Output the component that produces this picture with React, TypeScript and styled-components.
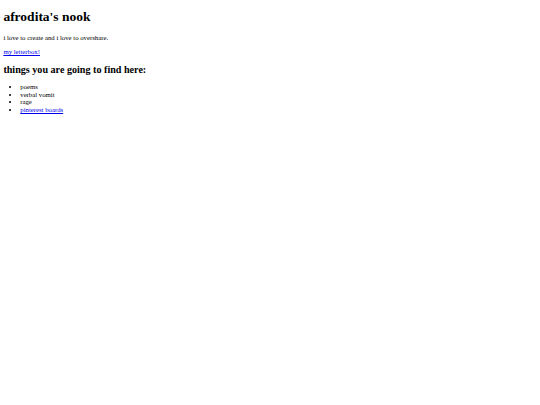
import styled, { createGlobalStyle } from 'styled-components';

// the reference is a plain default-styled page, shown at 540/1280 of its size
const GlobalStyle = createGlobalStyle`
  html, body {
    background: #fff;
  }
  body {
    margin: 3.375px;
    font-family: "Liberation Serif", "Times New Roman", serif;
    font-size: 6.75px;
    color: #000;
  }
`;

const Title = styled.h1`
  font-size: 13.5px;
  font-weight: bold;
  margin: 6px 0 9px;
`;

const Text = styled.p`
  margin: 6.75px 0;
`;

const Link = styled.a`
  color: #0000ee;
  text-decoration: underline;
`;

const Heading = styled.h2`
  font-size: 10.125px;
  font-weight: bold;
  margin: 8.4px 0;
`;

const List = styled.ul`
  margin: 8.5px 0 6.75px;
  padding-left: 16.875px;
  list-style: disc;
`;

const Item = styled.li`
  line-height: 7.7px;
`;

export default function App() {
  return (
    <>
      <GlobalStyle />
      <Title>afrodita's nook</Title>
      <Text>i love to create and i love to overshare.</Text>
      <Text>
        <Link href="#">my letterbox!</Link>
      </Text>
      <Heading>things you are going to find here:</Heading>
      <List>
        <Item>poems</Item>
        <Item>verbal vomit</Item>
        <Item>rage</Item>
        <Item>
          <Link href="#">pinterest boards</Link>
        </Item>
      </List>
    </>
  );
}
